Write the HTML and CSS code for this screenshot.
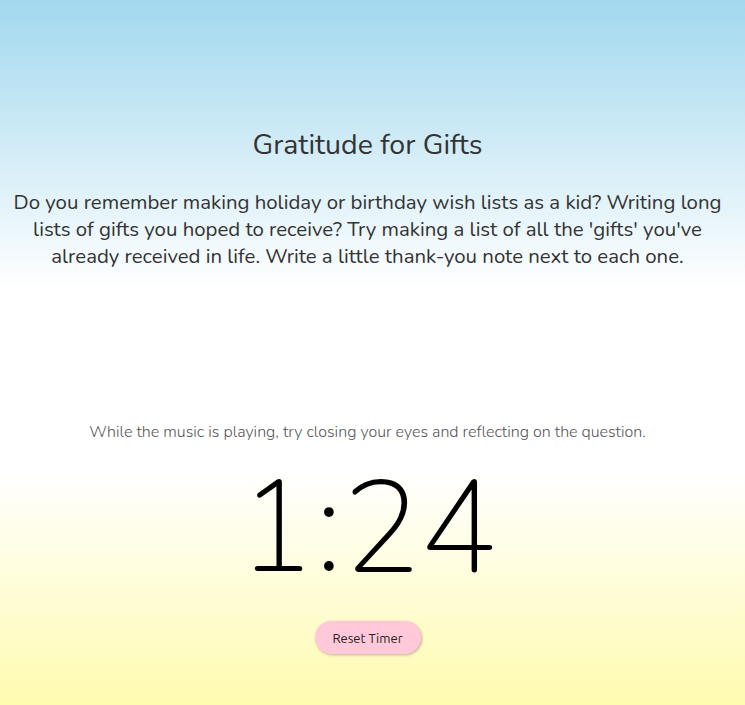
FILE: index.html
```html
<!DOCTYPE html>
<html lang="en">
<head>
<meta charset="utf-8">
<title>Gratitude for Gifts</title>
<link rel="stylesheet" href="styles.css">
</head>
<body>
<main class="page">
  <section class="prompt">
    <h1 class="title">Gratitude for Gifts</h1>
    <p class="question">Do you remember making holiday or birthday wish lists as a kid? Writing long lists of gifts you hoped to receive? Try making a list of all the 'gifts' you've already received in life. Write a little thank-you note next to each one.</p>
  </section>
  <section class="timer">
    <p class="hint">While the music is playing, try closing your eyes and reflecting on the question.</p>
    <div class="clock">1:24</div>
    <button class="reset" type="button">Reset Timer</button>
  </section>
</main>
</body>
</html>
```

FILE: styles.css
```css
html, body {
  margin: 0;
  padding: 0;
  height: 100%;
}
body {
  background: linear-gradient(180deg, #a2d8ee 0%, #ffffff 41%, #ffffff 67%, #fffbb0 100%);
  font-family: "Nunito", "Lato", "Open Sans", sans-serif;
  color: #333;
}
.page {
  min-height: 705px;
  box-sizing: border-box;
  padding-right: 10px;
  display: flex;
  flex-direction: column;
  align-items: center;
  text-align: center;
}
.prompt {
  padding: 127px 5px 0;
}
.title {
  margin: 0;
  font-size: 28.5px;
  font-weight: 400;
  line-height: 36px;
  color: #333;
}
.question {
  margin: 26px 0 0;
  font-size: 20.4px;
  line-height: 27px;
  color: #333;
}
.timer {
  margin-top: 151px;
  display: flex;
  flex-direction: column;
  align-items: center;
}
.hint {
  margin: 0;
  font-size: 16px;
  font-weight: 300;
  line-height: 22px;
  color: #555;
}
.clock {
  margin-top: 16px;
  font-size: 129px;
  font-weight: 200;
  line-height: 140px;
  color: #000;
}
.reset {
  margin-top: 22px;
  width: 106px;
  height: 33px;
  border: none;
  border-radius: 17px;
  background: #ffc9d9;
  color: #222;
  font-family: "Ubuntu", "Open Sans", "Liberation Sans", sans-serif;
  font-size: 13px;
  box-shadow: 1px 1px 3px rgba(120, 80, 80, 0.45);
  cursor: pointer;
}
```
